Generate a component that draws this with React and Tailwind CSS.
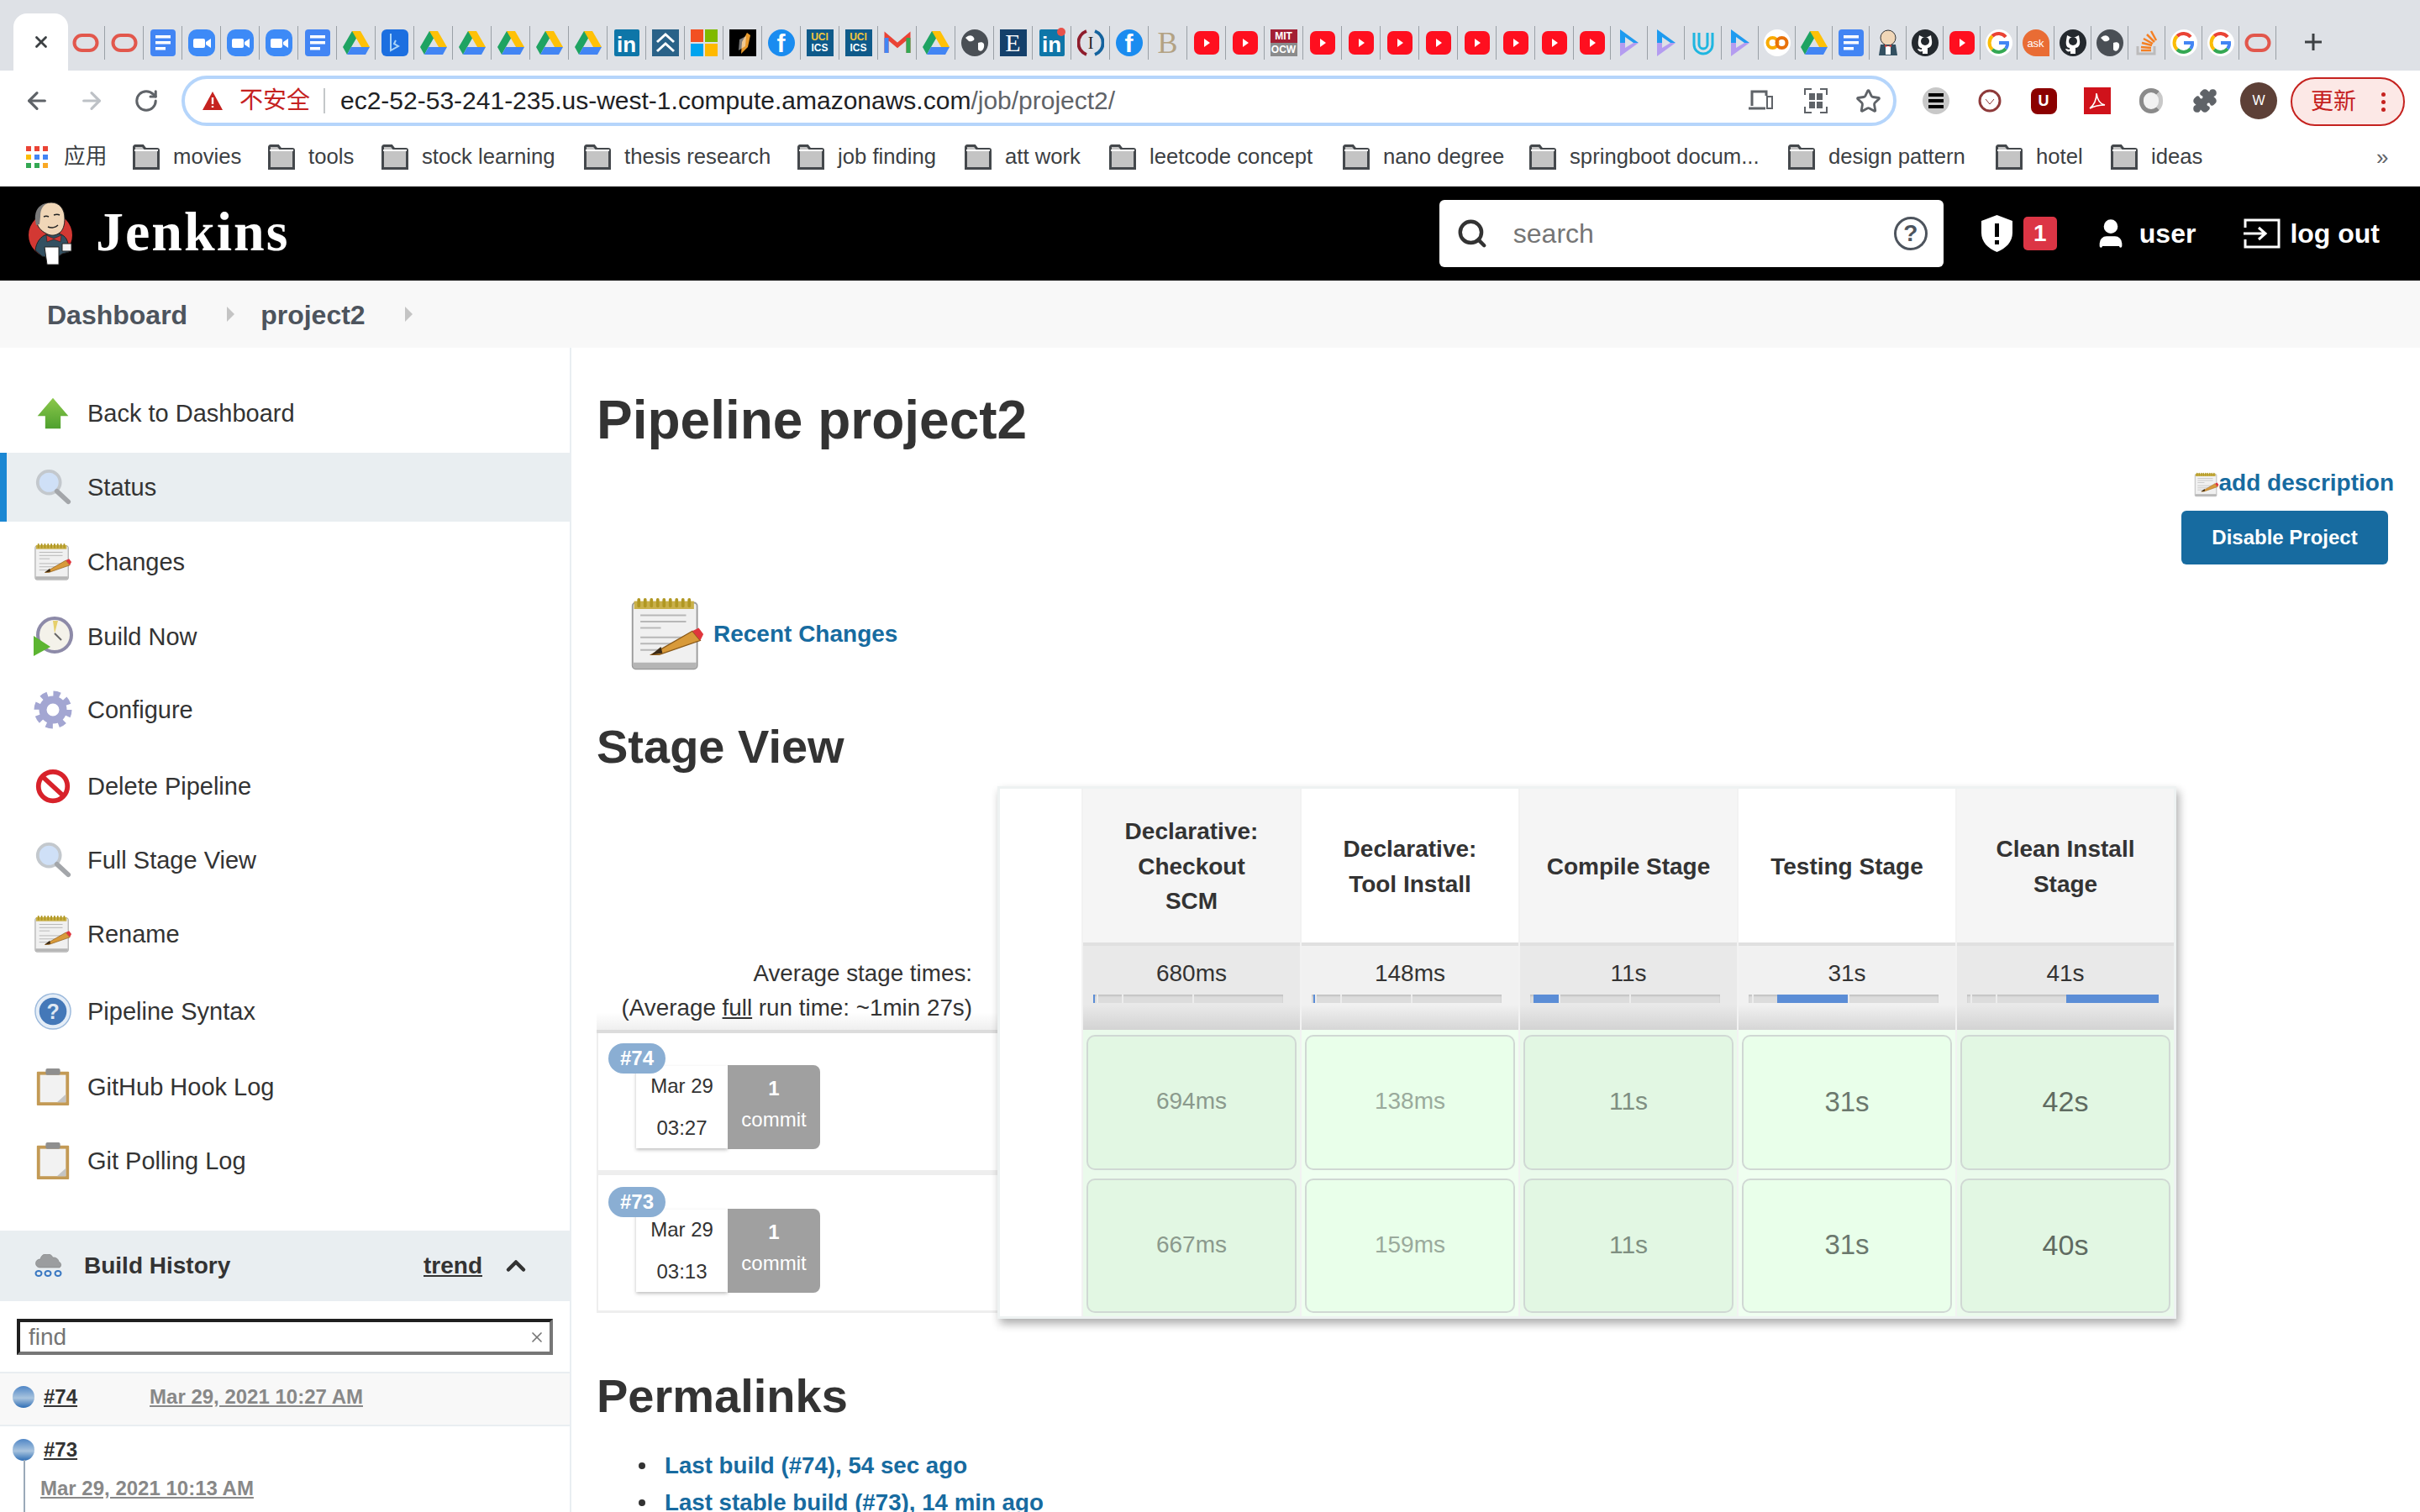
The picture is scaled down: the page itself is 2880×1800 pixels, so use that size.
import React from 'react';
import { Search, User, Star, ArrowLeft, ArrowRight, RotateCw, Puzzle, ChevronUp, X } from 'lucide-react';

const LINK = 'text-[#176ba0]';

// ---- favicons in the tab strip ----
function Fav({ type }) {
  const g = (children, vb = '0 0 32 32') => (
    <svg viewBox={vb} className="w-[32px] h-[32px]">{children}</svg>
  );
  switch (type) {
    case 'oracle':
      return g(<rect x="2.5" y="7" width="27" height="18" rx="9" fill="none" stroke="#e2574c" strokeWidth="4" />);
    case 'docs':
      return g(<><rect x="1" width="30" height="32" rx="4" fill="#4285f4" /><rect x="7" y="7" width="18" height="3.5" fill="#fff" /><rect x="7" y="14" width="18" height="3.5" fill="#fff" /><rect x="7" y="21" width="12" height="3.5" fill="#fff" /></>);
    case 'zoom':
      return g(<><rect width="32" height="32" rx="10" fill="#3d8af7" /><rect x="6" y="11" width="14" height="11" rx="2" fill="#fff" /><path d="M21 15l6-4v11l-6-4z" fill="#fff" /></>);
    case 'drive':
      return g(<><path d="M11 2h10l-11 19-5 9-5-9z" fill="#1ea362" /><path d="M11 2h10l11 19H22z" fill="#ffc107" /><path d="M5 30l5-9h22l-5 9z" fill="#4285f4" /></>);
    case 'bing':
      return g(<><rect width="32" height="32" rx="6" fill="#1c6fe0" /><path d="M11 5v20l9-5-5-3 2-4" fill="none" stroke="#a9d4f7" strokeWidth="2" /></>);
    case 'in':
      return (
        <div className="w-[30px] h-[32px] bg-[#0e76a8] rounded-[2px] flex items-end justify-center text-white font-bold text-[26px] leading-[28px]">in</div>
      );
    case 'in2':
      return (
        <div className="relative w-[30px] h-[32px] bg-[#0e76a8] rounded-[2px] flex items-end justify-center text-white font-bold text-[26px] leading-[28px]">
          in
          <div className="absolute -top-[2px] -right-[1px] w-[10px] h-[10px] rounded-full bg-[#e8524a]" />
        </div>
      );
    case 'chev':
      return g(<><rect width="32" height="32" fill="#2a6288" /><path d="M6 15l10-9 10 9M6 26l10-9 10 9" fill="none" stroke="#fff" strokeWidth="3" /></>);
    case 'ms':
      return g(<><rect width="15" height="15" fill="#f25022" /><rect x="17" width="15" height="15" fill="#7fba00" /><rect y="17" width="15" height="15" fill="#00a4ef" /><rect x="17" y="17" width="15" height="15" fill="#ffb900" /></>);
    case 'shield':
      return g(<><rect width="32" height="32" fill="#000" /><path d="M21 4l4 3-3 14-8 8 1-14z" fill="#e89a2c" /><path d="M12 12l8-4-1 12-8 5z" fill="#f5f5f5" opacity=".5" /></>);
    case 'fb':
      return (
        <div className="w-[32px] h-[32px] rounded-full bg-[#1a8cf0] flex items-end justify-center text-white font-bold text-[30px] leading-[30px]">f</div>
      );
    case 'uci':
      return (
        <div className="w-[32px] h-[32px] bg-[#0e5a8a] flex flex-col items-center justify-center text-[12px] leading-[13px] font-bold">
          <span className="text-[#f4c63d]">UCI</span>
          <span className="text-white">ICS</span>
        </div>
      );
    case 'gmail':
      return g(<><path d="M3 28V8l13 11L29 8v20" fill="none" stroke="#ea4335" strokeWidth="5" /><path d="M3 28V10" stroke="#4285f4" strokeWidth="5" /><path d="M29 28V10" stroke="#34a853" strokeWidth="5" /></>);
    case 'globe':
      return g(<><circle cx="16" cy="16" r="16" fill="#4a4f55" /><path d="M5 10c5-4 8-3 10 0s-3 5-6 4zM20 16c5-2 8 0 7 5s-5 6-7 3z" fill="#fff" /></>);
    case 'E':
      return (
        <div className="w-[32px] h-[32px] bg-[#14406b] flex items-center justify-center text-white font-['Liberation_Serif',serif] text-[30px] leading-none">E</div>
      );
    case 'I':
      return g(<><path d="M11 2a15 15 0 000 28" fill="none" stroke="#8f1d2c" strokeWidth="4" /><path d="M21 2a15 15 0 010 28" fill="none" stroke="#14639e" strokeWidth="4" /><text x="16" y="23" textAnchor="middle" fontSize="20" fontFamily="Liberation Serif" fill="#222">I</text></>);
    case 'B':
      return (
        <div className="w-[32px] h-[32px] flex items-center justify-center text-[#b3a283] font-['Liberation_Serif',serif] text-[36px] leading-none">B</div>
      );
    case 'yt':
      return g(<><rect x="1" y="2" width="30" height="28" rx="7" fill="#ff0f1f" /><path d="M13 11l7 5-7 5z" fill="#fff" /></>);
    case 'mit':
      return (
        <div className="w-[32px] h-[32px] flex flex-col text-[12px] leading-[16px] font-bold text-center text-white">
          <span className="bg-[#a31f34] h-[16px]">MIT</span>
          <span className="bg-[#8a8b8c] h-[16px]">OCW</span>
        </div>
      );
    case 'P':
      return g(<><path d="M5 0l22 16-6 0-10-7v7H5z" fill="#1e9bf0" /><path d="M5 16h6v6l10-6h6L5 32z" fill="#b49cf0" /></>);
    case 'U':
      return g(<path d="M5 4v14a11 11 0 0022 0V4M11 4v14a5 5 0 0010 0V4" fill="none" stroke="#1fb6e0" strokeWidth="3" />);
    case 'co':
      return g(<><circle cx="16" cy="16" r="16" fill="#fff" /><circle cx="10.5" cy="16" r="6" fill="none" stroke="#f9ab00" strokeWidth="4" /><circle cx="21.5" cy="16" r="6" fill="none" stroke="#e8710a" strokeWidth="4" /></>);
    case 'jenkins':
      return g(<><circle cx="16" cy="10" r="9" fill="#f0d6b7" stroke="#333" /><path d="M7 18h18l2 13H5z" fill="#335061" /><rect x="13" y="20" width="6" height="10" fill="#fff" /><path d="M12 18l4 2 4-2v3l-4-1-4 1z" fill="#d33833" /></>);
    case 'gh':
      return g(<><circle cx="16" cy="16" r="16" fill="#24292e" /><path d="M9 7l4 2h6l4-2 1 6c1 6-2 9-5 9v7h-6v-3c-3 1-5 0-6-3 2 0 3 1 5 1v-2c-3 0-5-3-4-9z" fill="#fff" /><circle cx="16" cy="14" r="5" fill="#24292e" /></>);
    case 'G':
      return g(<><circle cx="16" cy="16" r="16" fill="#fff" /><path d="M24 9a11 11 0 00-16-1" fill="none" stroke="#ea4335" strokeWidth="4" /><path d="M8 8a11 11 0 000 16" fill="none" stroke="#fbbc05" strokeWidth="4" /><path d="M8 24a11 11 0 0016-1" fill="none" stroke="#34a853" strokeWidth="4" /><path d="M16 16h10a10 10 0 01-2 7" fill="none" stroke="#4285f4" strokeWidth="4" /></>);
    case 'ask':
      return (
        <div className="w-[32px] h-[32px] rounded-full rounded-br-none bg-[#e96c34] flex items-center justify-center text-white text-[13px] leading-none">ask</div>
      );
    case 'so':
      return g(<><path d="M5 20v9h20v-9" fill="none" stroke="#bcbbbb" strokeWidth="3" /><path d="M9 25h12M9 21l12 1M10 16l12 3M12 11l11 6M16 6l9 9M21 2l6 11" stroke="#f48024" strokeWidth="2.5" /></>);
    default:
      return null;
  }
}

const tabsA = [
  'oracle', 'oracle', 'docs', 'zoom', 'zoom', 'zoom', 'docs', 'drive', 'bing', 'drive', 'drive', 'drive', 'drive', 'drive',
  'in', 'chev', 'ms', 'shield', 'fb', 'uci', 'uci', 'gmail', 'drive', 'globe', 'E', 'in2', 'I', 'fb', 'B',
  'yt', 'yt', 'mit', 'yt', 'yt', 'yt', 'yt', 'yt', 'yt', 'yt',
];
const tabsB = ['yt', 'P', 'P', 'U', 'P', 'co', 'drive', 'docs', 'jenkins', 'gh', 'yt', 'G', 'ask', 'gh', 'globe', 'so', 'G', 'G', 'oracle'];

const bookmarks = [
  { label: 'movies', w: 'w-[161px]' },
  { label: 'tools', w: 'w-[135px]' },
  { label: 'stock learning', w: 'w-[241px]' },
  { label: 'thesis research', w: 'w-[254px]' },
  { label: 'job finding', w: 'w-[199px]' },
  { label: 'att work', w: 'w-[172px]' },
  { label: 'leetcode concept', w: 'w-[278px]' },
  { label: 'nano degree', w: 'w-[222px]' },
  { label: 'springboot docum...', w: 'w-[308px]' },
  { label: 'design pattern', w: 'w-[247px]' },
  { label: 'hotel', w: 'w-[137px]' },
  { label: 'ideas', w: 'w-[100px]' },
];

function FolderIcon() {
  return (
    <svg viewBox="0 0 32 30" className="w-[32px] h-[30px] shrink-0">
      <path d="M1.5 28.5V3a1.5 1.5 0 011.5-1.5h9l3 4h14a1.5 1.5 0 011.5 1.5v21.5z" fill="#c4c4c4" stroke="#44484c" strokeWidth="3" />
      <path d="M2 7h28" stroke="#fff" strokeWidth="2" />
    </svg>
  );
}

function AppsIcon() {
  const colors = ['bg-[#ea4335]', 'bg-[#ea4335]', 'bg-[#ea4335]', 'bg-[#fbbc05]', 'bg-[#4285f4]', 'bg-[#4285f4]', 'bg-[#34a853]', 'bg-[#34a853]', 'bg-[#f9a825]'];
  return (
    <div className="grid grid-cols-3 gap-[4px] w-[26px]">
      {colors.map((c, i) => <div key={i} className={`w-[6px] h-[6px] ${c}`} />)}
    </div>
  );
}

// ---- classic jenkins 48px icons ----
function Notepad({ className }) {
  return (
    <svg viewBox="0 0 48 48" className={className}>
      <rect x="2" y="4" width="41" height="42" rx="2" fill="#f0f0f0" stroke="#9a9a9a" />
      <rect x="2.5" y="42" width="40" height="3.5" fill="#b5b5b5" />
      <rect x="3" y="3" width="38" height="5" fill="#c9b04a" />
      {[6, 10, 14, 18, 22, 26, 30, 34, 38].map(x => <rect key={x} x={x - 1} y="1" width="2" height="6" rx="1" fill="#b09722" />)}
      <g stroke="#b7b7b7" strokeWidth="1">
        <line x1="7" y1="12" x2="36" y2="12" />
        <line x1="7" y1="16" x2="36" y2="16" />
        <line x1="7" y1="20" x2="20" y2="20" />
        <line x1="7" y1="26" x2="36" y2="26" />
        <line x1="7" y1="30" x2="30" y2="30" />
        <line x1="7" y1="34" x2="26" y2="34" />
      </g>
      <path d="M14 37l26-15 5 6-26 9z" fill="#d89a3a" stroke="#8a5a1a" strokeWidth=".7" />
      <path d="M40 22l4-2 3 4-2 4z" fill="#e0363c" />
      <path d="M14 37l6-5 1 4z" fill="#3b2a15" />
    </svg>
  );
}

function Magnifier() {
  return (
    <svg viewBox="0 0 48 48" className="w-[46px] h-[46px]">
      <circle cx="19" cy="18" r="14" fill="#cfe0f7" stroke="#c3c8cd" strokeWidth="4" />
      <path d="M29 29l14 13" stroke="#a3a6aa" strokeWidth="6" strokeLinecap="round" />
    </svg>
  );
}

function UpArrow() {
  return (
    <svg viewBox="0 0 48 48" className="w-[40px] h-[40px]">
      <defs>
        <linearGradient id="upg" x1="0" x2="0" y1="0" y2="1">
          <stop offset="0" stopColor="#8cc84b" />
          <stop offset="1" stopColor="#4ea02e" />
        </linearGradient>
      </defs>
      <path d="M24 2l22 26H35v18H13V28H2z" fill="url(#upg)" />
    </svg>
  );
}

function BuildClock() {
  return (
    <svg viewBox="0 0 48 48" className="w-[48px] h-[48px]">
      <circle cx="26" cy="22" r="20" fill="#f4f2ea" stroke="#8d8aa8" strokeWidth="4" />
      <path d="M24 5l6 0-4 15z" fill="#e6cf6a" />
      <path d="M26 20l8 8" stroke="#666" strokeWidth="2" />
      <path d="M1 23l20 13L1 47z" fill="#5cb531" />
    </svg>
  );
}

function Gear() {
  return (
    <svg viewBox="0 0 48 48" className="w-[48px] h-[48px]">
      <circle cx="24" cy="24" r="19" fill="none" stroke="#a3a6d2" strokeWidth="7" strokeDasharray="8 6.9" />
      <circle cx="24" cy="24" r="12" fill="none" stroke="#a3a6d2" strokeWidth="9" />
    </svg>
  );
}

function NoEntry() {
  return (
    <svg viewBox="0 0 48 48" className="w-[46px] h-[46px]">
      <circle cx="24" cy="24" r="18" fill="#fff" stroke="#d8222b" strokeWidth="6" />
      <path d="M11 12l26 24" stroke="#d8222b" strokeWidth="6" />
    </svg>
  );
}

function HelpBall() {
  return (
    <svg viewBox="0 0 48 48" className="w-[46px] h-[46px]">
      <circle cx="24" cy="24" r="22" fill="#e4edf7" stroke="#9bb9dc" strokeWidth="1.5" />
      <circle cx="24" cy="24" r="17" fill="#4478b8" />
      <text x="24" y="33" textAnchor="middle" fontSize="26" fontWeight="700" fontFamily="Liberation Sans" fill="#dfe8f3">?</text>
    </svg>
  );
}

function Clipboard() {
  return (
    <svg viewBox="0 0 48 48" className="w-[46px] h-[46px]">
      <rect x="4" y="5" width="40" height="42" rx="1" fill="#c39a55" />
      <rect x="8" y="9" width="32" height="34" fill="#f2f2f2" />
      <path d="M40 33v10H29z" fill="#c4c4c4" />
      <rect x="15" y="1" width="18" height="8" rx="2" fill="#8f8f8f" />
    </svg>
  );
}

function CloudRain() {
  return (
    <svg viewBox="0 0 36 28" className="w-[36px] h-[28px]">
      <path d="M7 16a5 5 0 011-10 8 8 0 0115-2 6 6 0 017 5 4 4 0 011 7z" fill="#9b9d9f" stroke="#777" strokeWidth=".5" />
      <g fill="none" stroke="#3a78c2" strokeWidth="2">
        <ellipse cx="6" cy="23" rx="3.5" ry="3" />
        <ellipse cx="17" cy="23" rx="3.5" ry="3" />
        <ellipse cx="29" cy="23" rx="3.5" ry="3" />
      </g>
    </svg>
  );
}

function Ball({ id }) {
  return (
    <svg viewBox="0 0 28 28" className="w-[28px] h-[28px]">
      <defs>
        <linearGradient id={id} x1="0" x2="0" y1="0" y2="1">
          <stop offset="0" stopColor="#4f86c6" />
          <stop offset=".55" stopColor="#a9c4de" />
          <stop offset="1" stopColor="#2d6db5" />
        </linearGradient>
      </defs>
      <circle cx="14" cy="14" r="13" fill={`url(#${id})`} />
    </svg>
  );
}

function JenkinsLogo() {
  return (
    <svg viewBox="0 0 54 76" className="w-[54px] h-[76px] shrink-0">
      <circle cx="27" cy="40" r="26" fill="#d33833" />
      <path d="M9 58c1-9 6-17 14-19l14-1c6 2 10 5 11 13l1 9-8 2-8 6-16-3z" fill="#335061" stroke="#222" />
      <path d="M10 22C10 8 18 1 28 1c10 0 16 8 16 19 0 8-2 14-6 17-5 4-11 4-16 1-6-3-11-8-12-16z" fill="#f0d6b7" stroke="#222" />
      <path d="M10 28C6 14 12 3 23 2c-6 3-8 9-8 16l-1 9z" fill="#7a7a7a" />
      <path d="M31 16c3-1 5-1 7 0M19 18c2-1 4-1 6 0M24 30c4 2 9 1 12-2" fill="none" stroke="#222" strokeWidth="1.4" />
      <path d="M22 40l9 4 9-4-1 8-8-3-8 3z" fill="#d33833" stroke="#222" strokeWidth=".6" />
      <path d="M20 54h17v21H23z" fill="#fff" stroke="#222" />
      <path d="M41 50h11v9H41z" fill="#f4f4f4" stroke="#222" />
    </svg>
  );
}

const sideItems = [
  { label: 'Back to Dashboard', icon: <UpArrow />, mt: 'mt-0' },
  { label: 'Status', icon: <Magnifier />, mt: 'mt-[6px]', active: true },
  { label: 'Changes', icon: <Notepad className="w-[46px] h-[46px]" />, mt: 'mt-[7px]' },
  { label: 'Build Now', icon: <BuildClock />, mt: 'mt-[7px]' },
  { label: 'Configure', icon: <Gear />, mt: 'mt-[5px]' },
  { label: 'Delete Pipeline', icon: <NoEntry />, mt: 'mt-[9px]' },
  { label: 'Full Stage View', icon: <Magnifier />, mt: 'mt-[6px]' },
  { label: 'Rename', icon: <Notepad className="w-[46px] h-[46px]" />, mt: 'mt-[6px]' },
  { label: 'Pipeline Syntax', icon: <HelpBall />, mt: 'mt-[10px]' },
  { label: 'GitHub Hook Log', icon: <Clipboard />, mt: 'mt-[8px]' },
  { label: 'Git Polling Log', icon: <Clipboard />, mt: 'mt-[6px]' },
];

const stages = [
  { lines: ['Declarative:', 'Checkout', 'SCM'], avg: '680ms', seg: [0, 2], odd: true, cells: [['694ms', 'text-[28px] text-[#8b9a8d]'], ['667ms', 'text-[28px] text-[#8b9a8d]']] },
  { lines: ['Declarative:', 'Tool Install'], avg: '148ms', seg: [2, 2], odd: false, cells: [['138ms', 'text-[28px] text-[#9aaa9c]'], ['159ms', 'text-[28px] text-[#9aaa9c]']] },
  { lines: ['Compile Stage'], avg: '11s', seg: [4, 30], odd: true, cells: [['11s', 'text-[30px] text-[#7f8f81]'], ['11s', 'text-[30px] text-[#7f8f81]']] },
  { lines: ['Testing Stage'], avg: '31s', seg: [34, 84], odd: false, cells: [['31s', 'text-[33px] text-[#6b786d]'], ['31s', 'text-[33px] text-[#6b786d]']] },
  { lines: ['Clean Install', 'Stage'], avg: '41s', seg: [118, 110], odd: true, cells: [['42s', 'text-[34px] text-[#5f6b61]'], ['40s', 'text-[34px] text-[#5f6b61]']] },
];

const runs = [
  { id: '#74', day: 'Mar 29', time: '03:27', box: 'h-[166px] pt-[38px] border-b-[3px]', badge: '-top-[26px]' },
  { id: '#73', day: 'Mar 29', time: '03:13', box: 'h-[167px] pt-[40px] border-t-[3px] border-b-[3px]', badge: '-top-[26px]' },
];

function ProgressBar({ seg }) {
  return (
    <div className="relative ml-[12px] mr-[20px] h-[10px] bg-[#dcdcdc] shadow-[inset_0_2px_2px_rgba(0,0,0,0.12)]">
      {[4, 34, 118].map(t => (
        <div key={t} className="absolute top-0 h-full w-[2px] bg-[#ececec]" style={{ left: t }} />
      ))}
      <div className="absolute top-0 h-full bg-[#5b8dd6]" style={{ left: seg[0], width: seg[1] }} />
    </div>
  );
}

function TabStrip() {
  return (
    <div className="h-[84px] bg-[#dee1e6] flex pl-[16px]">
      <div className="w-[65px] h-[68px] mt-[16px] bg-white rounded-t-[16px] flex items-center justify-center text-[#3c4043]">
        <X size={22} strokeWidth={3} />
      </div>
      <div className="flex h-[40px] mt-[31px] -ml-[2px]">
        {tabsA.map((t, i) => (
          <div key={i} className="w-[46px] h-full border-r border-[#9aa0a6] flex items-center justify-center"><Fav type={t} /></div>
        ))}
        {tabsB.map((t, i) => (
          <div key={i} className="w-[44px] h-full border-r border-[#9aa0a6] flex items-center justify-center"><Fav type={t} /></div>
        ))}
      </div>
      <svg viewBox="0 0 24 24" className="w-[24px] h-[24px] mt-[38px] ml-[32px]">
        <path d="M12 2v20M2 12h20" stroke="#3c4043" strokeWidth="3" />
      </svg>
    </div>
  );
}

function AddressRow() {
  return (
    <div className="h-[66px] pt-[6px] flex pl-[11px]">
      <div className="w-[65px] h-[60px] flex items-center justify-center text-[#5f6368]"><ArrowLeft size={32} strokeWidth={2.4} /></div>
      <div className="w-[65px] h-[60px] flex items-center justify-center text-[#bdc1c6]"><ArrowRight size={32} strokeWidth={2.4} /></div>
      <div className="w-[65px] h-[60px] flex items-center justify-center text-[#5f6368]"><RotateCw size={30} strokeWidth={2.4} /></div>
      <div className="ml-[10px] w-[2041px] h-[60px] rounded-[30px] border-[4px] border-[#b5d5fb] flex items-center pl-[20px] pr-[14px]">
        <svg viewBox="0 0 26 24" className="w-[26px] h-[24px] shrink-0"><path d="M13 1l12 22H1z" fill="#c5221f" /><path d="M13 8v8M13 18v2" stroke="#fff" strokeWidth="2.4" /></svg>
        <span className="ml-[19px] text-[28px] text-[#c5221f] leading-none w-[84px] whitespace-nowrap">不安全</span>
        <div className="ml-[16px] w-[2px] h-[30px] bg-[#c4c7c9]" />
        <span className="ml-[18px] text-[30px] leading-none text-[#202124] whitespace-nowrap">
          ec2-52-53-241-235.us-west-1.compute.amazonaws.com<span className="text-[#5f6368]">/job/project2/</span>
        </span>
        <div className="ml-auto flex items-center text-[#5f6368]">
          <svg viewBox="0 0 30 28" className="w-[30px] h-[28px]"><path d="M22 8V3H5v17M1 23h20" fill="none" stroke="#5f6368" strokeWidth="3" /><rect x="23" y="9" width="6" height="14" fill="none" stroke="#5f6368" strokeWidth="2" /></svg>
          <svg viewBox="0 0 28 30" className="w-[28px] h-[30px] ml-[37px]"><path d="M1 8V1h8M19 1h8v7M27 22v7h-8M9 29H1v-7" fill="none" stroke="#5f6368" strokeWidth="2" /><rect x="6" y="6" width="7" height="8" fill="#5f6368" /><rect x="15" y="6" width="7" height="8" fill="#5f6368" /><rect x="6" y="16" width="7" height="8" fill="#5f6368" /><rect x="15" y="16" width="7" height="8" fill="#5f6368" /></svg>
          <Star className="ml-[33px] w-[31px] h-[31px]" strokeWidth={2.2} />
        </div>
      </div>
      <div className="ml-[15px] flex h-[60px]">
        <div className="w-[64px] flex items-center justify-center">
          <div className="w-[32px] h-[32px] rounded-full bg-[#c8c8c8] flex flex-col items-center justify-center gap-[3px]">
            <div className="w-[18px] h-[4px] bg-black" /><div className="w-[18px] h-[4px] bg-black" /><div className="w-[18px] h-[4px] bg-black" />
          </div>
        </div>
        <div className="w-[64px] flex items-center justify-center">
          <svg viewBox="0 0 28 28" className="w-[28px] h-[28px]"><circle cx="14" cy="14" r="12" fill="none" stroke="#8e3a3a" strokeWidth="3" /><path d="M9 12l5 6 5-6" fill="none" stroke="#8e3a3a" strokeWidth="1" /></svg>
        </div>
        <div className="w-[64px] flex items-center justify-center">
          <div className="w-[31px] h-[31px] bg-[#8b0000] rounded-[8px] flex items-center justify-center text-white font-bold text-[18px] leading-none">U</div>
        </div>
        <div className="w-[64px] flex items-center justify-center">
          <div className="w-[32px] h-[32px] bg-[#d0121b] flex items-center justify-center">
            <svg viewBox="0 0 24 24" className="w-[24px] h-[24px]"><path d="M3 21c5-4 8-10 8-18 1 8 4 13 10 14-6 0-12 1-18 4z" fill="none" stroke="#fff" strokeWidth="1.6" /></svg>
          </div>
        </div>
        <div className="w-[64px] flex items-center justify-center">
          <div className="w-[28px] h-[30px] rounded-full border-[5px] border-[#8a8a8a] border-r-[#c8c8c8] bg-[#f2f2f2]" />
        </div>
        <div className="w-[64px] flex items-center justify-center text-[#5f6368]"><Puzzle className="w-[30px] h-[30px] fill-[#5f6368]" /></div>
        <div className="w-[64px] flex items-center justify-center">
          <div className="w-[44px] h-[44px] rounded-full bg-[#5d4037] text-white text-[16px] flex items-center justify-center leading-none">W</div>
        </div>
      </div>
      <div className="ml-[6px] mt-[2px] w-[136px] h-[58px] rounded-[29px] border-2 border-[#c5221f] bg-[#fce8e6] flex items-center pl-[22px] text-[#c5221f] text-[27px] leading-none">
        更新
        <div className="ml-auto mr-[21px] flex flex-col gap-[4px]">
          <div className="w-[5px] h-[5px] rounded-full bg-[#c5221f]" /><div className="w-[5px] h-[5px] rounded-full bg-[#c5221f]" /><div className="w-[5px] h-[5px] rounded-full bg-[#c5221f]" />
        </div>
      </div>
    </div>
  );
}

function BookmarkRow() {
  return (
    <div className="h-[72px] pt-[2px] flex items-center pl-[31px] text-[25.7px] leading-none text-[#3c4043] whitespace-nowrap">
      <AppsIcon />
      <span className="ml-[19px] w-[82px]">应用</span>
      {bookmarks.map(b => (
        <div key={b.label} className={`flex items-center gap-[16px] ${b.w}`}>
          <FolderIcon />
          <span>{b.label}</span>
        </div>
      ))}
      <span className="ml-[216px] text-[26px] text-[#5f6368]">»</span>
    </div>
  );
}

function JenkinsHeader() {
  return (
    <header className="h-[112px] bg-black flex items-center pl-[33px] pr-[48px]">
      <JenkinsLogo />
      <span className="ml-[27px] -mt-[4px] font-['Liberation_Serif',serif] font-bold text-[66px] tracking-[2px] leading-none text-white">Jenkins</span>
      <div className="ml-auto w-[600px] h-[80px] bg-white rounded-[6px] flex items-center pl-[20px] pr-[19px]">
        <Search className="w-[38px] h-[38px] text-[#333]" strokeWidth={2.8} />
        <span className="ml-[30px] text-[32px] leading-none text-[#757575]">search</span>
        <div className="ml-auto w-[40px] h-[40px] rounded-full border-[3px] border-[#4d545d] flex items-center justify-center text-[28px] font-bold leading-none text-[#4d545d]">?</div>
      </div>
      <svg viewBox="0 0 37 44" className="ml-[45px] w-[37px] h-[44px] shrink-0">
        <path d="M18.5 0L37 7v14c0 11-8 19-18.5 23C8 40 0 32 0 21V7z" fill="#fff" />
        <path d="M18.5 10v16M18.5 30v5" stroke="#000" strokeWidth="5" />
      </svg>
      <div className="ml-[13px] w-[40px] h-[40px] rounded-[5px] bg-[#dc3545] flex items-center justify-center text-white font-bold text-[28px] leading-none">1</div>
      <User className="ml-[44px] w-[40px] h-[40px] text-white fill-white" />
      <span className="ml-[14px] text-white font-bold text-[32px] leading-none">user</span>
      <svg viewBox="0 0 44 36" className="ml-[57px] w-[44px] h-[36px] shrink-0">
        <path d="M2 11V2h40v32H2v-9" fill="none" stroke="#fff" strokeWidth="3" />
        <path d="M0 18h25M18 11l8 7-8 7" fill="none" stroke="#fff" strokeWidth="3" />
      </svg>
      <span className="ml-[11px] text-white font-bold text-[32px] leading-none">log out</span>
    </header>
  );
}

function Caret() {
  return <div className="w-0 h-0 border-y-[9px] border-y-transparent border-l-[9px] border-l-[#c4c4c4]" />;
}

function Breadcrumbs() {
  return (
    <div className="h-[80px] bg-[#f8f8f8] flex items-center pl-[56px] text-[32px] font-bold text-[#4d545d] leading-none">
      <span className="mt-[2px]">Dashboard</span>
      <div className="ml-[47px]"><Caret /></div>
      <span className="ml-[31px] mt-[2px]">project2</span>
      <div className="ml-[47px]"><Caret /></div>
    </div>
  );
}

function Sidebar() {
  return (
    <aside className="w-[680px] shrink-0 border-r-2 border-[#e9eef2] pt-[37px] text-[#333]">
      {sideItems.map(item => (
        <div
          key={item.label}
          className={`h-[82px] flex items-center text-[29px] leading-none ${item.mt} ${item.active ? 'bg-[#e9eef1] border-l-[8px] border-[#1b87d3] pl-[30px]' : 'pl-[38px]'}`}
        >
          <div className="w-[50px] flex justify-center shrink-0">{item.icon}</div>
          <span className="ml-[16px]">{item.label}</span>
        </div>
      ))}
      <div className="mt-[42px] h-[84px] bg-[#e9eef1] flex items-center pl-[40px] font-bold text-[28px] leading-none">
        <CloudRain />
        <span className="ml-[24px]">Build History</span>
        <span className="ml-auto underline">trend</span>
        <ChevronUp className="ml-[22px] mr-[46px] w-[36px] h-[36px]" strokeWidth={3} />
      </div>
      <div className="mt-[21px] mx-[20px] h-[43px] border-[4px] border-t-[#1f1f1f] border-l-[#1f1f1f] border-b-[#767676] border-r-[#767676] flex items-center pl-[10px] pr-[5px] text-[28px] leading-none text-[#757575]">
        find
        <X className="ml-auto w-[20px] h-[20px]" strokeWidth={2} />
      </div>
      <div className="mt-[20px] h-[65px] pb-[5px] bg-[#f8f8f8] border-y-2 border-[#e9eef1] flex items-center pl-[14px] text-[24px] font-bold leading-none">
        <Ball id="ball74" />
        <span className="ml-[10px] underline text-[#333]">#74</span>
        <span className="ml-[86px] underline text-[#888]">Mar 29, 2021 10:27 AM</span>
      </div>
      <div className="relative pt-[14px] pl-[14px] text-[24px] font-bold leading-none">
        <div className="absolute left-[28px] top-[40px] h-[80px] w-[2px] bg-[#9aa9b8]" />
        <div className="flex items-center">
          <Ball id="ball73" />
          <span className="ml-[10px] underline text-[#333]">#73</span>
        </div>
        <div className="mt-[20px] ml-[34px] underline text-[#888]">Mar 29, 2021 10:13 AM</div>
      </div>
    </aside>
  );
}

function StageView() {
  return (
    <div className="mt-[14px] flex items-start">
      <div className="w-[477px] shrink-0 pt-[186px]">
        <div className="h-[108px] pr-[30px] pt-[10px] border-b-[4px] border-[#dcdcdc] bg-[linear-gradient(to_bottom,#ffffff_80%,#efefef_100%)] flex flex-col justify-center text-right text-[27.8px] leading-[41px] text-[#333] whitespace-nowrap">
          <div>Average stage times:</div>
          <div>(Average <span className="underline">full</span> run time: ~1min 27s)</div>
        </div>
        {runs.map(r => (
          <div key={r.id} className={`border-l-2 border-[#eeeeee] pl-[45px] ${r.box}`}>
            <div className="relative flex items-center w-fit">
              <div className={`absolute -left-[33px] ${r.badge} z-10 w-[68px] h-[36px] rounded-[18px] bg-[#8aaed3] flex items-center justify-center text-white font-bold text-[24px] leading-none`}>{r.id}</div>
              <div className="w-[109px] h-[98px] bg-white shadow-[0_2px_4px_rgba(0,0,0,0.25)] flex flex-col items-center justify-between py-[12px] text-[24px] leading-none text-[#333]">
                <span>{r.day}</span>
                <span>{r.time}</span>
              </div>
              <div className="w-[110px] h-[100px] rounded-r-[8px] bg-[#a0a0a0] flex flex-col items-center pt-[16px] text-white text-[24px] leading-none">
                <span className="font-bold">1</span>
                <span className="mt-[13px]">commit</span>
              </div>
            </div>
          </div>
        ))}
      </div>
      <div className="w-[1403px] border-[3px] border-[#eef2f2] shadow-[3px_6px_10px_rgba(0,0,0,0.32)] bg-white grid grid-cols-[97px_repeat(5,260px)] grid-rows-[183px_104px_171px_170px] text-[#333]">
        <div className="row-span-4 col-start-1" />
        {stages.map((s, col) => (
          <div key={col} className="row-span-4 grid grid-rows-subgrid border-l-2 border-[#f2f2f2]">
            <div className={`flex flex-col items-center justify-center font-bold text-[28px] leading-[41.5px] pt-[2px] ${s.odd ? 'bg-[#f5f5f5]' : 'bg-white'}`}>
              {s.lines.map(l => <div key={l}>{l}</div>)}
            </div>
            <div className={`border-t-[4px] border-[#e0e0e0] pt-[19px] text-center text-[28px] leading-none ${s.odd ? 'bg-[linear-gradient(to_bottom,#e9e9e9_70%,#d3d3d3_100%)]' : 'bg-[linear-gradient(to_bottom,#f1f1f1_70%,#d6d6d6_100%)]'}`}>
              <div className="h-[27px]">{s.avg}</div>
              <div className="mt-[12px]"><ProgressBar seg={s.seg} /></div>
            </div>
            {s.cells.map(([t, cls], i) => (
              <div key={i} className={`px-[4px] pt-[6px] pb-[4px] ${s.odd ? 'bg-[#eafaeb]' : 'bg-[#effff0]'}`}>
                <div className={`h-full pb-[3px] rounded-[10px] border-2 border-[#d0d8d4] flex items-center justify-center leading-none ${cls} ${s.odd ? 'bg-[#e2f7e3]' : 'bg-[#e9ffea]'}`}>{t}</div>
              </div>
            ))}
          </div>
        ))}
      </div>
    </div>
  );
}

function Main() {
  return (
    <main className="flex-1 min-w-0 pl-[30px] pr-[31px] text-[#333]">
      <h1 className="mt-[49px] text-[64px] font-bold leading-[74px] whitespace-nowrap">Pipeline project2</h1>
      <div className="mt-[18px] h-[40px] flex items-center justify-end">
        <Notepad className="w-[30px] h-[30px] mt-[4px]" />
        <span className={`text-[28px] font-bold leading-none ${LINK}`}>add description</span>
      </div>
      <div className="mt-[13px] flex justify-end pr-[7px]">
        <div className="w-[246px] h-[64px] rounded-[6px] bg-[#176ba0] flex items-center justify-center text-white font-bold text-[24px] leading-none">Disable Project</div>
      </div>
      <div className="mt-[38px] ml-[39px] flex items-center">
        <Notepad className="w-[90px] h-[90px]" />
        <span className={`ml-[10px] text-[28px] font-bold leading-none ${LINK}`}>Recent Changes</span>
      </div>
      <h2 className="mt-[56px] text-[56px] font-bold leading-[66px]">Stage View</h2>
      <StageView />
      <h2 className="mt-[59px] text-[56px] font-bold leading-[66px]">Permalinks</h2>
      <ul className="mt-[28px] ml-[50px] text-[27.7px] font-bold leading-[44px]">
        <li className="flex items-center gap-[23px]">
          <div className="w-[8px] h-[8px] rounded-full bg-[#333]" />
          <span className={LINK}>Last build (#74), 54 sec ago</span>
        </li>
        <li className="flex items-center gap-[23px]">
          <div className="w-[8px] h-[8px] rounded-full bg-[#333]" />
          <span className={LINK}>Last stable build (#73), 14 min ago</span>
        </li>
      </ul>
    </main>
  );
}

export default function App() {
  return (
    <div className="w-[2880px] h-[1800px] overflow-hidden bg-white font-['Liberation_Sans','Noto_Sans_CJK_SC',sans-serif]">
      <TabStrip />
      <AddressRow />
      <BookmarkRow />
      <JenkinsHeader />
      <Breadcrumbs />
      <div className="flex h-[1386px]">
        <Sidebar />
        <Main />
      </div>
    </div>
  );
}
